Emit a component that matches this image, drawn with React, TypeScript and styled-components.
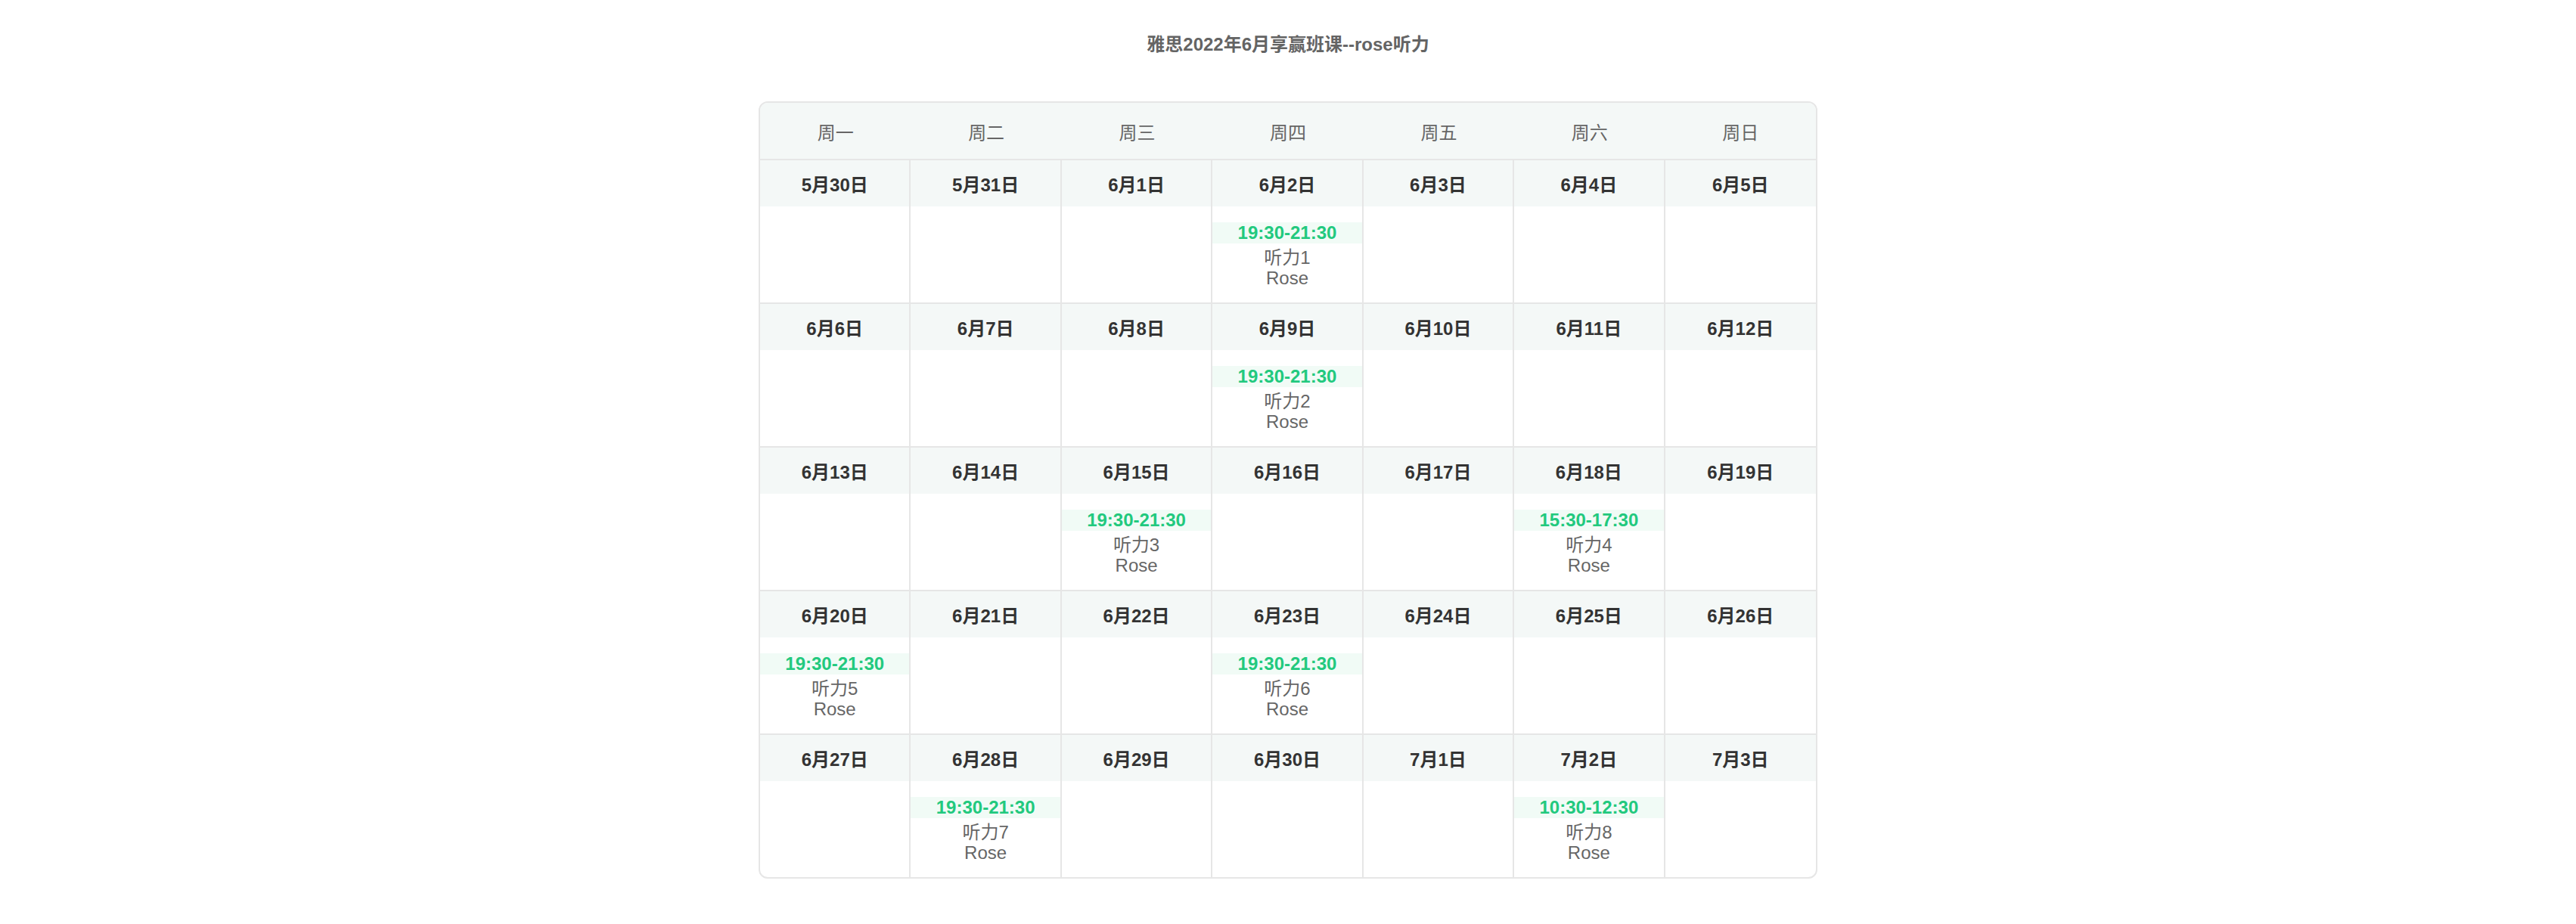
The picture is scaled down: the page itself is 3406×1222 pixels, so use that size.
import React from "react";
import styled, { createGlobalStyle } from "styled-components";

const GlobalStyle = createGlobalStyle`
  html, body {
    margin: 0;
    padding: 0;
    background: #ffffff;
  }
  body {
    font-family: "Liberation Sans", "Noto Sans CJK SC", sans-serif;
  }
  * { box-sizing: border-box; }
`;

const Page = styled.div`
  width: 100%;
  display: flex;
  flex-direction: column;
  align-items: center;
  padding-top: 44px;
`;

const Title = styled.h1`
  margin: 0;
  font-size: 24px;
  line-height: 30px;
  font-weight: 700;
  color: #646464;
  font-family: "Liberation Sans", "Noto Sans CJK SC", sans-serif;
`;

const Table = styled.div`
  margin-top: 60px;
  width: 1400px;
  border: 2px solid #e6e6e6;
  border-radius: 12px;
  overflow: hidden;
  background: #ffffff;
`;

const HeaderRow = styled.div`
  display: grid;
  grid-template-columns: repeat(7, 1fr);
  height: 74px;
  background: #f4f8f7;
`;

const WeekdayCell = styled.div`
  display: flex;
  align-items: center;
  justify-content: center;
  font-size: 24px;
  color: #666666;
`;

const WeekRow = styled.div`
  display: grid;
  grid-template-columns: repeat(7, 1fr);
  border-top: 2px solid #e6e6e6;
`;

const DayCell = styled.div<{ $last: boolean }>`
  display: flex;
  flex-direction: column;
  border-right: ${(p) => (p.$last ? "none" : "2px solid #e6e6e6")};
`;

const DateBand = styled.div`
  height: 61px;
  display: flex;
  align-items: center;
  justify-content: center;
  background: #f4f8f7;
  font-size: 24px;
  font-weight: 700;
  color: #333333;
`;

const Content = styled.div`
  height: 127px;
  padding-top: 21px;
  display: flex;
  flex-direction: column;
  align-items: stretch;
  text-align: center;
`;

const TimeBand = styled.div`
  height: 28px;
  line-height: 28px;
  background: #f1fbf6;
  color: #22c97e;
  font-size: 24px;
  font-weight: 700;
`;

const Line = styled.div<{ $first?: boolean }>`
  font-size: 24px;
  line-height: 27px;
  color: #666666;
  margin-top: ${(p) => (p.$first ? "5px" : "0")};
`;

type Lesson = { time: string; name: string; teacher: string };
type Day = { date: string; lesson?: Lesson };

const L = (time: string, n: number): Lesson => ({
  time,
  name: `听力${n}`,
  teacher: "Rose",
});

const weeks: Day[][] = [
  [
    { date: "5月30日" },
    { date: "5月31日" },
    { date: "6月1日" },
    { date: "6月2日", lesson: L("19:30-21:30", 1) },
    { date: "6月3日" },
    { date: "6月4日" },
    { date: "6月5日" },
  ],
  [
    { date: "6月6日" },
    { date: "6月7日" },
    { date: "6月8日" },
    { date: "6月9日", lesson: L("19:30-21:30", 2) },
    { date: "6月10日" },
    { date: "6月11日" },
    { date: "6月12日" },
  ],
  [
    { date: "6月13日" },
    { date: "6月14日" },
    { date: "6月15日", lesson: L("19:30-21:30", 3) },
    { date: "6月16日" },
    { date: "6月17日" },
    { date: "6月18日", lesson: L("15:30-17:30", 4) },
    { date: "6月19日" },
  ],
  [
    { date: "6月20日", lesson: L("19:30-21:30", 5) },
    { date: "6月21日" },
    { date: "6月22日" },
    { date: "6月23日", lesson: L("19:30-21:30", 6) },
    { date: "6月24日" },
    { date: "6月25日" },
    { date: "6月26日" },
  ],
  [
    { date: "6月27日" },
    { date: "6月28日", lesson: L("19:30-21:30", 7) },
    { date: "6月29日" },
    { date: "6月30日" },
    { date: "7月1日" },
    { date: "7月2日", lesson: L("10:30-12:30", 8) },
    { date: "7月3日" },
  ],
];

const weekdays = ["周一", "周二", "周三", "周四", "周五", "周六", "周日"];

export default function App() {
  return (
    <>
      <GlobalStyle />
      <Page>
        <Title>雅思2022年6月享赢班课--rose听力</Title>
        <Table>
          <HeaderRow>
            {weekdays.map((w) => (
              <WeekdayCell key={w}>{w}</WeekdayCell>
            ))}
          </HeaderRow>
          {weeks.map((week, wi) => (
            <WeekRow key={wi}>
              {week.map((day, di) => (
                <DayCell key={day.date} $last={di === 6}>
                  <DateBand>{day.date}</DateBand>
                  <Content>
                    {day.lesson && (
                      <>
                        <TimeBand>{day.lesson.time}</TimeBand>
                        <Line $first>{day.lesson.name}</Line>
                        <Line>{day.lesson.teacher}</Line>
                      </>
                    )}
                  </Content>
                </DayCell>
              ))}
            </WeekRow>
          ))}
        </Table>
      </Page>
    </>
  );
}
